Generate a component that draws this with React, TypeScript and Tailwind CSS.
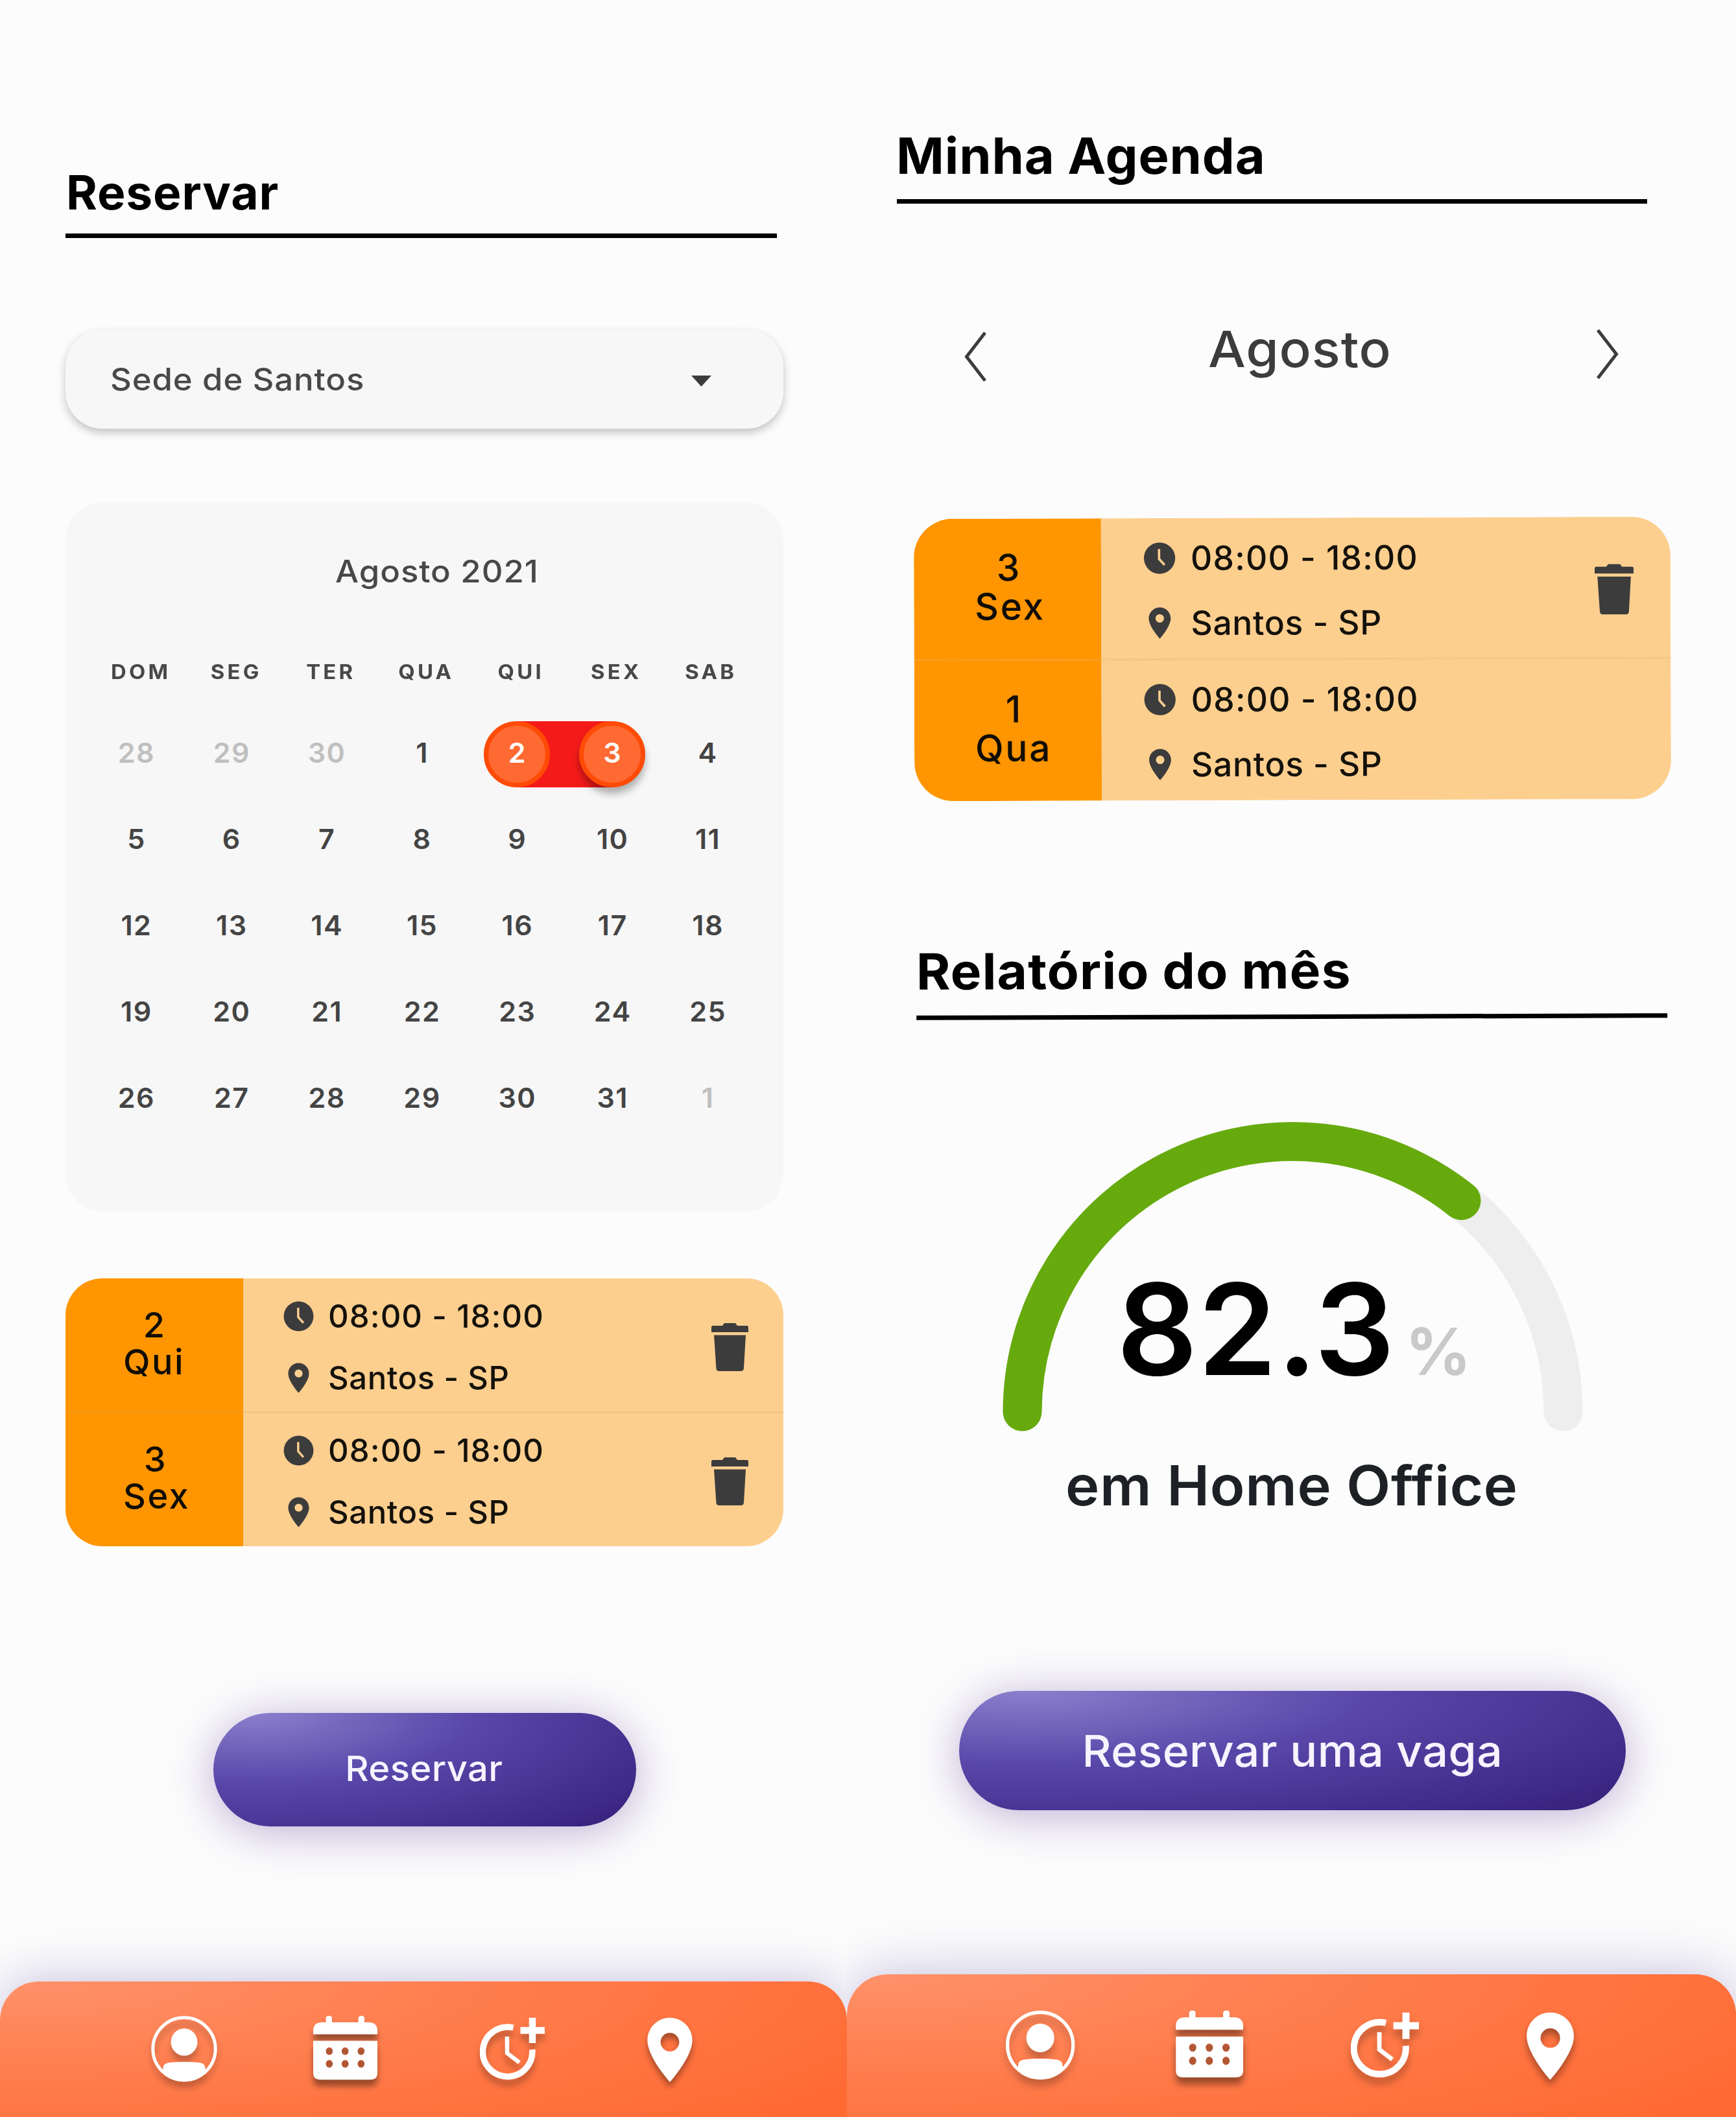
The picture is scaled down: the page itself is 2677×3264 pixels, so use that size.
import type { ReactNode } from "react";

const weekdays = ["DOM", "SEG", "TER", "QUA", "QUI", "SEX", "SAB"];
const weeks = [
  [28, 29, 30, 1, 2, 3, 4],
  [5, 6, 7, 8, 9, 10, 11],
  [12, 13, 14, 15, 16, 17, 18],
  [19, 20, 21, 22, 23, 24, 25],
  [26, 27, 28, 29, 30, 31, 1],
];

type Booking = { day: number; label: string; removable: boolean };

function ClockIcon() {
  return (
    <svg viewBox="0 0 24 24" className="size-[55px] shrink-0">
      <circle cx="12" cy="12" r="10" fill="#3c3c3c" />
      <path d="M11.700 6.200V12.500L15.200 16.400" fill="none" stroke="#fdcf8f" strokeWidth="1.500" />
    </svg>
  );
}

function PlaceIcon() {
  return (
    <svg viewBox="0 0 24 24" className="size-[55px] shrink-0 fill-[#3c3c3c]">
      <path d="M12 2C8.130 2 5 5.130 5 9c0 5.250 7 13 7 13s7-7.750 7-13c0-3.870-3.130-7-7-7zm0 9.700a2.700 2.700 0 0 1 0-5.400 2.700 2.700 0 0 1 0 5.400z" />
    </svg>
  );
}

function TrashIcon() {
  return (
    <svg viewBox="0 0 57 74" className="h-[74px] w-[57px] fill-[#3c3c3c]">
      <path d="M0 6.500Q0 4 2.500 4H17l3-4h17l3 4h14.500Q57 4 57 6.500V14H0z" />
      <path d="M4 18.500H53L50 69.500Q49.700 74 45 74H12Q7.800 74 7.400 69.500z" />
    </svg>
  );
}

function BookingRow({ booking, divided }: { booking: Booking; divided: boolean }) {
  return (
    <div className="relative flex h-[206.500px]">
      <div className="w-[274px] bg-[#ff9500] pt-[43px] pl-[89px]">
        <div className="w-fit text-center text-[54px] leading-[57px] font-medium tracking-[2.500px] text-[#100d05]">
          <div className={booking.label === "Sex" ? "pr-[3px]" : "pl-[2px]"}>{booking.day}</div>
          <div>{booking.label}</div>
        </div>
      </div>
      <div className="flex flex-1 justify-between bg-[#fdcf8f] pr-[54px] pl-[58px]">
        <div className="pt-[11px] text-[49px] leading-[95px] font-medium text-[#14110b]">
          <div className="flex items-center gap-[18px]">
            <ClockIcon />
            <span className="tracking-[1.100px]">08:00 - 18:00</span>
          </div>
          <div className="flex items-center gap-[18px]">
            <PlaceIcon />
            <span className="tracking-[0.600px]">Santos - SP</span>
          </div>
        </div>
        {booking.removable && (
          <button aria-label="Excluir" className="mt-[69px] h-[74px]">
            <TrashIcon />
          </button>
        )}
      </div>
      {divided && <div className="absolute inset-x-0 -top-[2px] h-[3px] bg-[#e6a850]/25" />}
    </div>
  );
}

function BookingCard({ bookings }: { bookings: Booking[] }) {
  return (
    <div className="w-[1107px] overflow-hidden rounded-[57px]">
      {bookings.map((b, i) => (
        <BookingRow key={i} booking={b} divided={i > 0} />
      ))}
    </div>
  );
}

function DayCell({ day, row, col }: { day: number; row: number; col: number }) {
  const muted = (row === 0 && col < 3) || (row === 4 && col === 6);
  const start = row === 0 && col === 4;
  const end = row === 0 && col === 5;
  if (start || end) {
    return (
      <div className="relative flex h-[133px] items-center justify-center">
        {start && <div className="absolute top-[18px] right-0 left-1/2 h-[102px] bg-[#f51a1a]" />}
        {end && <div className="absolute top-[18px] right-1/2 -left-px h-[102px] bg-[#f51a1a]" />}
        <div
          className={
            end
              ? "absolute top-[18px] left-[22px] size-[102px] rounded-full border-[7px] border-[#ff4b05] bg-[#ff6a33] shadow-[0_10px_12px_rgba(0,0,0,0.3)]"
              : "absolute top-[18px] left-[22px] size-[102px] rounded-full border-[7px] border-[#ff4b05] bg-[#ff6a33]"
          }
        />
        <span className="relative tracking-[1.500px] text-white">{day}</span>
      </div>
    );
  }
  return (
    <div className={muted ? "flex h-[133px] items-center justify-center text-[#bfbfbf]" : "flex h-[133px] items-center justify-center text-[#444444]"}>
      <span className="tracking-[1.500px]">{day}</span>
    </div>
  );
}

function Calendar() {
  return (
    <div className="flex h-[1093px] w-[1107px] flex-col rounded-[57px] bg-[#f7f7f7] pt-[76px]">
      <h2 className="pl-[38px] text-center text-[48px] leading-[60px] font-medium text-[#484848]">
        <span className="inline-block scale-x-[1.06] tracking-[0.910px]">Agosto 2021</span>
      </h2>
      <div className="mt-[105px] ml-[43px] grid w-[1026px] grid-cols-7 text-center text-[31px] leading-[40px] font-bold text-[#484848]">
        {weekdays.map((d) => (
          <span key={d} className="scale-x-[1.06] tracking-[4px]">
            {d}
          </span>
        ))}
      </div>
      <div className="mt-[38px] ml-[36px] grid w-[1028px] grid-cols-7 text-[43px] font-semibold">
        {weeks.map((week, r) => week.map((day, c) => <DayCell key={`${r}-${c}`} day={day} row={r} col={c} />))}
      </div>
    </div>
  );
}

function NavBar() {
  return (
    <nav className="flex h-[211px] w-[1306px] rounded-t-[60px] bg-[radial-gradient(ellipse_100%_130%_at_4%_0%,#ff9169_0%,#ff7b4a_58%,#ff6a33_115%)] pt-[53px] pl-[233px] shadow-[0_0_80px_rgba(80,60,160,0.32)]">
      <svg viewBox="0 0 102 102" className="size-[102px] fill-white drop-shadow-[0_10px_5px_rgba(0,0,0,0.22)]">
        <circle cx="51" cy="51" r="48.200" fill="none" stroke="white" strokeWidth="5" />
        <ellipse cx="51" cy="40.500" rx="20.500" ry="21" />
        <path d="M18.500 86V80Q19 73.500 27 72.300Q51 69.500 75 72.300Q83 73.500 83.500 80V86A48 48 0 0 1 18.500 86z" />
      </svg>
      <svg viewBox="0 0 99 99" className="ml-[148px] size-[99px] fill-white drop-shadow-[0_10px_5px_rgba(0,0,0,0.4)]">
        <path d="M19.500 10V4Q19.500 0 24.300 0T29 4V10H69.500V4Q69.500 0 74.300 0T79 4V10H87Q99 11 99 23V28.500H0V23Q0 11 12 10z" />
        <path
          fillRule="evenodd"
          d="M0 38.500H99V88Q99 98.500 88 98.500H11Q0 98.500 0 88zM19.500 54.600a5.300 6 0 1 0 10.600 0a5.300 6 0 1 0-10.600 0M43.900 54.600a5.300 6 0 1 0 10.600 0a5.300 6 0 1 0-10.600 0M68.500 54.600a5.300 6 0 1 0 10.600 0a5.300 6 0 1 0-10.600 0M19.500 74a5.300 6 0 1 0 10.600 0a5.300 6 0 1 0-10.600 0M43.900 74a5.300 6 0 1 0 10.600 0a5.300 6 0 1 0-10.600 0M68.500 74a5.300 6 0 1 0 10.600 0a5.300 6 0 1 0-10.600 0"
        />
      </svg>
      <svg viewBox="0 0 100 96" fill="none" stroke="white" className="mt-[3px] ml-[158px] h-[96px] w-[100px] drop-shadow-[0_10px_5px_rgba(0,0,0,0.25)]">
        <path strokeWidth="9.500" d="M51.500 15.300A38.200 38.200 0 1 0 80.700 49" />
        <path strokeWidth="10.500" d="M81 0V39M62.500 19.500H100" />
        <path strokeWidth="6.500" d="M42 29V54.500L61 69" />
      </svg>
      <svg viewBox="5 2 14 20" className="mt-[3px] ml-[154px] h-[99px] w-[78px] fill-white drop-shadow-[0_8px_5px_rgba(0,0,0,0.35)]">
        <path d="M12 2C8.130 2 5 5.130 5 9c0 5.250 7 13 7 13s7-7.750 7-13c0-3.870-3.130-7-7-7zm0 10.500a2.900 2.900 0 0 1 0-5.800 2.900 2.900 0 0 1 0 5.800z" />
      </svg>
    </nav>
  );
}

function PillButton({ className, children }: { className: string; children: ReactNode }) {
  return (
    <button
      className={`flex items-center justify-center rounded-full bg-[radial-gradient(ellipse_100%_120%_at_10%_0%,#8b7ecc_0%,#5847a9_52%,#38237f_116%)] font-medium text-[#f6f3ff] shadow-[0_8px_70px_rgba(88,50,150,0.38)] ${className}`}
    >
      <span className="inline-block scale-x-[1.04]">{children}</span>
    </button>
  );
}

function Gauge() {
  return (
    <div className="relative mt-[157px] ml-[240px] h-[480px] w-[895px]">
      <svg viewBox="0 0 895 480" className="absolute inset-0 h-[480px] w-[895px]" fill="none" strokeWidth="60" strokeLinecap="round">
        <path stroke="#eeeeee" d="M30.500 448.500A417 417 0 0 1 864.500 448.500" />
        <path stroke="#66aa0d" d="M30.500 448.500A417 417 0 0 1 707.500 123" />
      </svg>
      <div className="relative flex items-baseline pt-[224px] pl-[176px] font-semibold">
        <span className="text-[195px] leading-[194px] tracking-[0.300px] text-black">82.3</span>
        <span className="ml-[16px] text-[100px] leading-[100px] font-bold text-[#c9c9c9]">%</span>
      </div>
    </div>
  );
}

function BookScreen() {
  return (
    <section className="flex h-[3264px] w-[1306px] flex-col overflow-hidden pt-[253px]">
      <h1 className="ml-[102px] text-[73px] leading-[88px] font-bold tracking-[0.900px] text-black">Reservar</h1>
      <div className="mt-[19px] ml-[101px] h-[6.500px] w-[1097px] bg-black" />
      <button className="mt-[141.500px] ml-[101px] flex h-[153px] w-[1107px] items-center justify-between rounded-[57px] bg-[#f7f7f7] pr-[111px] pl-[69px] shadow-[0_6px_14px_rgba(0,0,0,0.23)]">
        <span className="origin-left scale-x-[1.06] text-[48px] leading-[60px] font-medium tracking-[0.830px] text-[#484848]">Sede de Santos</span>
        <svg viewBox="0 0 31 17" className="mt-[5px] h-[17px] w-[31px] fill-[#3c3c3c]">
          <path d="M0 0H31L15.500 17z" />
        </svg>
      </button>
      <div className="mt-[114px] ml-[101px]">
        <Calendar />
      </div>
      <div className="mt-[103px] ml-[101px]">
        <BookingCard
          bookings={[
            { day: 2, label: "Qui", removable: true },
            { day: 3, label: "Sex", removable: true },
          ]}
        />
      </div>
      <PillButton className="mt-[257px] ml-[329px] h-[175px] w-[652px] pr-[3px] pb-[4px] text-[54px] tracking-[0.380px]">Reservar</PillButton>
      <div className="mt-auto h-[209px]">
        <NavBar />
      </div>
    </section>
  );
}

function AgendaScreen() {
  return (
    <section className="flex h-[3264px] w-[1371px] flex-col overflow-hidden pt-[196px]">
      <h1 className="ml-[76px] w-fit origin-left scale-x-[1.03] text-[77px] leading-[88px] font-bold tracking-[0.850px] text-black">Minha Agenda</h1>
      <div className="mt-[23px] ml-[77px] h-[7px] w-[1157px] bg-black" />
      <div className="mt-[173px] ml-[181px] flex h-[100px] w-[1009px] justify-between">
        <svg viewBox="0 0 34 78" fill="none" stroke="#3c3c3c" strokeWidth="5" className="mt-[24px] h-[78px] w-[34px]">
          <path d="M32 2L3.500 39L32 76" />
        </svg>
        <h2 className="ml-[26px] scale-x-[1.06] text-[77px] leading-[102px] font-medium tracking-[0.860px] text-[#3c3c3c]">Agosto</h2>
        <svg viewBox="0 0 34 78" fill="none" stroke="#3c3c3c" strokeWidth="5" className="mt-[20px] h-[78px] w-[34px]">
          <path d="M2 2L30.500 39L2 76" />
        </svg>
      </div>
      <div className="mt-[213px] ml-[103px] h-[436px]">
        <div className="w-[1107px] origin-top-left scale-[1.054] -rotate-[0.17deg]">
          <BookingCard
            bookings={[
              { day: 3, label: "Sex", removable: true },
              { day: 1, label: "Qua", removable: false },
            ]}
          />
        </div>
      </div>
      <div className="mt-[216px] ml-[107px] w-[1158px] -rotate-[0.17deg]">
        <h1 className="w-fit origin-left scale-x-[1.04] text-[77px] leading-[88px] font-bold tracking-[1.100px] text-black">Relatório do mês</h1>
        <div className="mt-[24px] h-[7px] bg-black" />
      </div>
      <Gauge />
      <p className="mt-[33px] ml-[337px] w-fit origin-left scale-x-[1.04] text-[85px] leading-[100px] font-semibold tracking-[0.640px] text-[#1d2126]">
        em Home Office
      </p>
      <PillButton className="mt-[266px] ml-[173px] h-[184px] w-[1028px] pt-[3px] text-[67px] tracking-[0.480px]">Reservar uma vaga</PillButton>
      <div className="mt-auto h-[220.500px]">
        <div className="w-[1306px] origin-top-left scale-[1.05]">
          <NavBar />
        </div>
      </div>
    </section>
  );
}

export default function App() {
  return (
    <main className="flex h-[3264px] w-[2677px] overflow-hidden bg-[#fcfcfc] font-['Inter',sans-serif]">
      <BookScreen />
      <AgendaScreen />
    </main>
  );
}
